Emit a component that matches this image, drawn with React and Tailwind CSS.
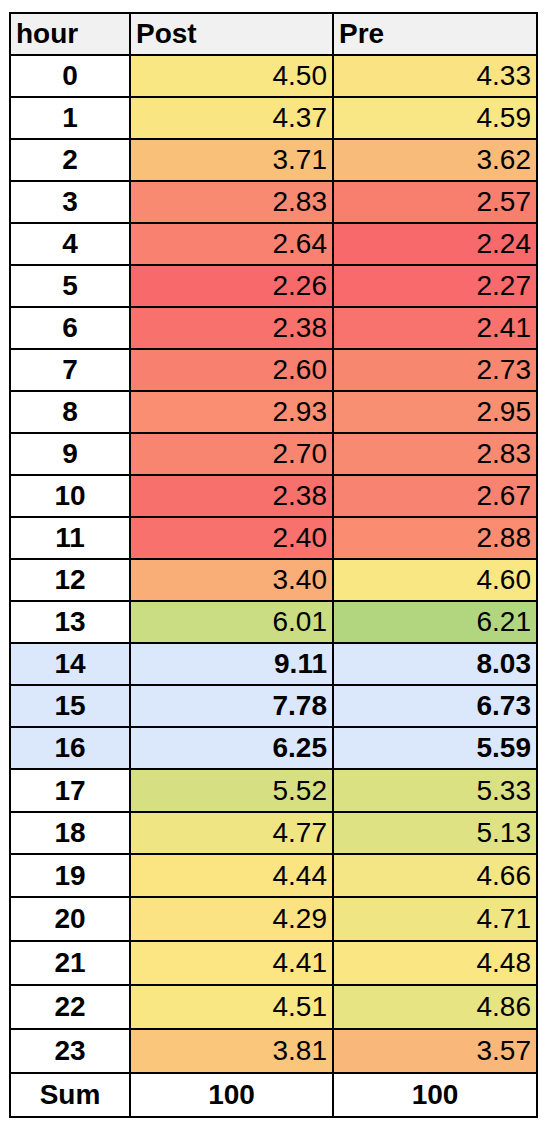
import React from 'react';

const rows = [
  { hour: '0', post: '4.50', pre: '4.33', postBg: 'bg-[#f9e784]', preBg: 'bg-[#fae383]', h: 'h-[40px]' },
  { hour: '1', post: '4.37', pre: '4.59', postBg: 'bg-[#fae583]', preBg: 'bg-[#f8e784]', h: 'h-[40px]' },
  { hour: '2', post: '3.71', pre: '3.62', postBg: 'bg-[#f9c07a]', preBg: 'bg-[#f9bb79]', h: 'h-[40px]' },
  { hour: '3', post: '2.83', pre: '2.57', postBg: 'bg-[#f88a71]', preBg: 'bg-[#f87e6e]', h: 'h-[40px]' },
  { hour: '4', post: '2.64', pre: '2.24', postBg: 'bg-[#f8826f]', preBg: 'bg-[#f8696b]', h: 'h-[40px]' },
  { hour: '5', post: '2.26', pre: '2.27', postBg: 'bg-[#f8696b]', preBg: 'bg-[#f86a6b]', h: 'h-[40px]' },
  { hour: '6', post: '2.38', pre: '2.41', postBg: 'bg-[#f8716c]', preBg: 'bg-[#f8736d]', h: 'h-[40px]' },
  { hour: '7', post: '2.60', pre: '2.73', postBg: 'bg-[#f8806f]', preBg: 'bg-[#f88770]', h: 'h-[40px]' },
  { hour: '8', post: '2.93', pre: '2.95', postBg: 'bg-[#f98e72]', preBg: 'bg-[#f98f72]', h: 'h-[40px]' },
  { hour: '9', post: '2.70', pre: '2.83', postBg: 'bg-[#f88570]', preBg: 'bg-[#f88a71]', h: 'h-[40px]' },
  { hour: '10', post: '2.38', pre: '2.67', postBg: 'bg-[#f8706c]', preBg: 'bg-[#f88370]', h: 'h-[40px]' },
  { hour: '11', post: '2.40', pre: '2.88', postBg: 'bg-[#f8716c]', preBg: 'bg-[#f98c71]', h: 'h-[40px]' },
  { hour: '12', post: '3.40', pre: '4.60', postBg: 'bg-[#f9ae78]', preBg: 'bg-[#f9e784]', h: 'h-[40px]' },
  { hour: '13', post: '6.01', pre: '6.21', postBg: 'bg-[#cadd82]', preBg: 'bg-[#b2d580]', h: 'h-[40px]' },
  { hour: '14', post: '9.11', pre: '8.03', blue: true, h: 'h-[40px]' },
  { hour: '15', post: '7.78', pre: '6.73', blue: true, h: 'h-[40px]' },
  { hour: '16', post: '6.25', pre: '5.59', blue: true, h: 'h-[40px]' },
  { hour: '17', post: '5.52', pre: '5.33', postBg: 'bg-[#d6e082]', preBg: 'bg-[#d9e183]', h: 'h-[41px]' },
  { hour: '18', post: '4.77', pre: '5.13', postBg: 'bg-[#efe583]', preBg: 'bg-[#dee283]', h: 'h-[40px]' },
  { hour: '19', post: '4.44', pre: '4.66', postBg: 'bg-[#fbe583]', preBg: 'bg-[#f4e684]', h: 'h-[41px]' },
  { hour: '20', post: '4.29', pre: '4.71', postBg: 'bg-[#fbe282]', preBg: 'bg-[#efe683]', h: 'h-[42px]' },
  { hour: '21', post: '4.41', pre: '4.48', postBg: 'bg-[#fbe683]', preBg: 'bg-[#fae683]', h: 'h-[42px]' },
  { hour: '22', post: '4.51', pre: '4.86', postBg: 'bg-[#f9e784]', preBg: 'bg-[#e6e483]', h: 'h-[42px]' },
  { hour: '23', post: '3.81', pre: '3.57', postBg: 'bg-[#fac67b]', preBg: 'bg-[#f9b879]', h: 'h-[42px]' },
];

const rowGrid = 'grid grid-cols-[118px_201px_202px] gap-[2px]';

const App = () => {
  return (
    <div className="min-h-[1140px] bg-white pl-[9px] pt-[12px] font-['Liberation_Sans',Arial,sans-serif] text-[28px] leading-none text-black">
      <div className="flex w-[529px] flex-col gap-[2px] bg-black p-[2px]">
        {/* header */}
        <div className={`${rowGrid} h-[40px]`}>
          <div className="flex items-center bg-[#f1f1f1] pl-[5px] font-bold">hour</div>
          <div className="flex items-center bg-[#f1f1f1] pl-[5px] font-bold">Post</div>
          <div className="flex items-center bg-[#f1f1f1] pl-[5px] font-bold">Pre</div>
        </div>

        {rows.map((r) => (
          <div key={r.hour} className={`${rowGrid} ${r.h}`}>
            <div
              className={`flex items-center justify-center font-bold ${
                r.blue ? 'bg-[#dbe7fb]' : 'bg-white'
              }`}
            >
              {r.hour}
            </div>
            <div
              className={`flex items-center justify-end pr-[5px] ${
                r.blue ? 'bg-[#dbe7fb] font-bold' : r.postBg
              }`}
            >
              {r.post}
            </div>
            <div
              className={`flex items-center justify-end pr-[5px] ${
                r.blue ? 'bg-[#dbe7fb] font-bold' : r.preBg
              }`}
            >
              {r.pre}
            </div>
          </div>
        ))}

        {/* totals */}
        <div className={`${rowGrid} h-[42px]`}>
          <div className="flex items-center justify-center bg-white font-bold">Sum</div>
          <div className="flex items-center justify-center bg-white font-bold">100</div>
          <div className="flex items-center justify-center bg-white font-bold">100</div>
        </div>
      </div>
    </div>
  );
};

export default App;
